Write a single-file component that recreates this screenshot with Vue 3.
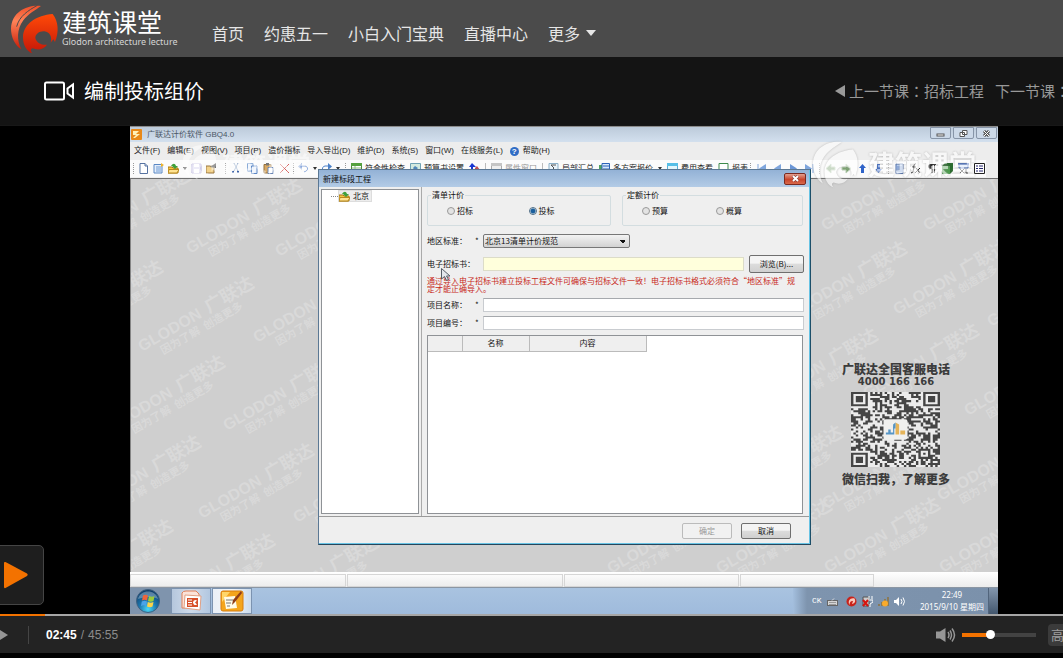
<script setup>
import { ref } from 'vue'

const navItems = ['首页', '约惠五一', '小白入门宝典', '直播中心']
const menus = ['文件(F)', '编辑(E)', '视图(V)', '项目(P)', '造价指标', '导入导出(D)', '维护(D)', '系统(S)', '窗口(W)', '在线服务(L)']

const flameLeft = 'M123 12C80 8 35 30 33 80C33 105 45 130 64 142C50 115 50 82 70 55C85 35 105 25 123 12Z'
const flameBody = 'M158 36C110 40 70 65 69 105C69 130 80 148 97 154C90 146 92 140 98 139C114 146 132 142 141 128C126 130 110 124 106 108C106 96 118 87 133 88C149 90 157 104 152 122L160 112L165 120C177 90 176 60 158 36Z'

// Each icon is a list of [path, fill, stroke] on an 11 x 11 grid
const icons = {
  doc: [['M2 .5H7L9.500 3V10.500H2Z', '#fff', '#5672a0'], ['M7 .5V3H9.500', '#c9d8ef', '#5672a0']],
  cal: [['M1 1.500H9V10H1Z', '#e4eefb', '#5b88c4'], ['M3 4H8M3 6H8M3 8H8', 'none', '#6e9bd4'], ['M8 0L11 2L8 4Z', '#f0b429', 'none']],
  folder: [['M0 4H4L5 5H10V10H0Z', '#f6c544', '#a87910'], ['M1 6.500H11L9 10H0Z', '#ffe391', '#b8891c'], ['M3 3C5 0 7 0 8 3H10L7 6L4 3H6Z', '#3fa03a', 'none']],
  save: [['M1 1H10V10H1Z', '#dcd9f2', '#b3add8'], ['M3 1H8V4H3ZM3 6H8V10H3Z', '#fff', 'none']],
  export: [['M0 3H8V10H0Z', '#f3d28a', '#997640'], ['M4 4L10 0V5Z', '#333', 'none']],
  cut: [['M3 0L7 8M7 0L3 8', 'none', '#8fa7c8'], ['M1 8H3V10H1ZM6 8H8V10H6Z', '#3c62a8', 'none']],
  copy: [['M.5 .5H6V8H.5Z', '#e7f0fb', '#7ea2d3'], ['M4.500 3H10V10.500H4.500Z', '#e7f0fb', '#5c86c4']],
  paste: [['M1 1.500H8V10H1Z', '#d9a964', '#94703a'], ['M3 0H6V2.500H3Z', '#777', 'none'], ['M5 4.500H10V10.500H5Z', '#fff', '#6b87b5']],
  del: [['M1 1L10 10M10 1L1 10', 'none', '#d6605c']],
  undo: [['M2 3H7C11 4 10 8 6 9', 'none', '#8aa8dc'], ['M0 3.500L4 0V7Z', '#8aa8dc', 'none']],
  redo: [['M9 3H4C0 4 1 8 5 9', 'none', '#4a80c8'], ['M11 3.500L7 0V7Z', '#4a80c8', 'none']],
  table: [['M.5 .5H10.500V10H.5Z', '#fff', '#4d8a3b'], ['M0 0H11V3H0Z', '#55a13e', 'none'], ['M1 5H10M4 3V10', 'none', '#8dbb7f']],
  gear: [['M.5 .5H10.500V10H.5Z', '#d4eadf', '#6fa2b5'], ['M3 5L5 3L8 5L5 8Z', '#4f86b9', 'none']],
  up2: [['M3 0L7 4H4V9H2V4H0Z', '#1836d0', 'none'], ['M6 5L8 3L11 7H8V10H6Z', '#c05050', 'none']],
  panel: [['M.5 .5H10.500V9H.5Z', '#eee', '#aaa'], ['M0 0H11V3H0Z', '#c5c5c5', 'none']],
  sum: [['M1 .5H10V10H1Z', '#eaf4fb', '#8bb0c9'], ['M3 2H8M3 2L6 5L3 8H8', 'none', '#555']],
  multi: [['M0 2H3V10H0Z', '#50a35e', 'none'], ['M3 .5H10.500V9H3Z', '#d6e7fb', '#2c62b8'], ['M4 3H10M4 6H10', 'none', '#2c62b8']],
  view: [['M.5 .5H10.500V10H.5Z', '#e3f6fc', '#56afd7'], ['M0 0H11V3H0Z', '#56bfe7', 'none']],
  sheet: [['M1 .5H10V10H1Z', '#fff', '#3e8b4c']],
  first: [['M2 1V10', 'none', '#7ea5dc'], ['M10 1V10L3 5.500Z', '#7ea5dc', 'none']],
  prev: [['M9 1V10L2 5.500Z', '#7ea5dc', 'none']],
  next: [['M2 1V10L9 5.500Z', '#6b96d6', 'none']],
  last: [['M9 1V10', 'none', '#7ea5dc'], ['M1 1V10L8 5.500Z', '#7ea5dc', 'none']],
  left: [['M1 5.500L6 1V4H10V7H6V10Z', '#7da373', '#b9cdb4']],
  right: [['M10 5.500L5 1V4H1V7H5V10Z', '#7da373', '#b9cdb4']],
  up: [['M5.500 1L9 5H7V10H4V5H2Z', '#2f63c8', 'none']],
  down: [['M5.500 10L9 6H7V1H4V6H2Z', '#2f63c8', 'none']],
  clip: [['M2 1H9V10.500H2Z', '#b9d0f2', '#4c6da8'], ['M3 4H8M3 6H8M3 8H8', 'none', '#6486c4']],
  fx: [['M6 1C4 0 4 3 3 9L1 10M2 4H6M6 5L10 10M10 5L5 10', 'none', '#222']],
  para: [['M5 1H10V2H9V10H8V2H6.500V10H5.500V6C1 6 1 1 5 1Z', '#222', 'none']],
  cube: [['M0 3L3 0H11V8L8 11H0Z', '#2b6b2f', 'none'], ['M0 3H8V11H0Z', '#4b9a4c', 'none']],
  link: [['M1 .5H10V5H1Z', '#cfe0fb', '#3e68bd'], ['M0 0H11V2H0Z', '#3e68bd', 'none'], ['M2 6L6 10M6 6L2 10M8 6V10H10', 'none', '#333']],
  list: [['M.5 .5H10.500V10.500H.5Z', '#fff', '#222'], ['M2 3H4M5 3H9M2 5.500H4M5 5.500H9M2 8H4M5 8H9', 'none', '#26266f']]
}

const groups = [
  { name: 'file', items: [{ i: 'doc' }, { i: 'cal' }, { i: 'folder' }, { caret: 1 }, { i: 'save' }, { i: 'export' }] },
  { name: 'edit', items: [{ i: 'cut' }, { i: 'copy' }, { i: 'paste' }, { i: 'del' }] },
  { name: 'history', items: [{ i: 'undo' }, { caret: 1 }, { i: 'redo' }, { caret: 1 }] },
  {
    name: 'project', items: [
      { i: 'table', t: '符合性检查' }, { i: 'gear', t: '预算书设置' }, { i: 'up2' }, { sep: 1 },
      { i: 'panel', t: '属性窗口', off: true }, { sep: 1 }, { i: 'sum', t: '局部汇总' },
      { i: 'multi', t: '多方案报价' }, { caret: 1 }, { i: 'view', t: '费用查看' }, { i: 'sheet', t: '报表' }]
  },
  { name: 'move', items: [{ i: 'first' }, { i: 'prev' }, { i: 'next' }, { i: 'last' }] },
  { name: 'arrows', items: [{ i: 'left' }, { i: 'right' }, { i: 'up' }, { i: 'down' }] },
  { name: 'extras', items: [{ i: 'clip' }, { i: 'fx' }, { i: 'para' }, { i: 'cube' }, { i: 'link' }, { i: 'list' }] }
]

// Anchor points of the repeated desktop watermark
const marks = [
  [78, 243], [189, 253], [278, 256], [50, 335], [141, 351], [256, 342], [112, 430], [226, 430],
  [88, 510], [201, 518], [296, 522], [60, 594], [162, 608], [266, 610],
  [610, 573], [719, 573], [827, 572], [942, 572], [825, 508], [940, 500], [730, 500],
  [765, 403], [866, 398], [967, 415], [794, 316], [896, 314], [990, 326], [824, 230], [926, 230]
]

// QR symbol: three finder squares and a deterministic module field
const N = 37
function finder(x, y) {
  for (const [fx, fy] of [[0, 0], [N - 7, 0], [0, N - 7]]) {
    const dx = x - fx, dy = y - fy
    if (dx >= -1 && dx <= 7 && dy >= -1 && dy <= 7) {
      const r = Math.max(Math.abs(dx - 3), Math.abs(dy - 3))
      return r === 3 || r <= 1 ? 1 : 0
    }
  }
  const a = Math.max(Math.abs(x - 30), Math.abs(y - 30))
  if (a <= 2) return a === 1 ? 0 : 1
  return -1
}
let seed = 4127
let qr = ''
for (let y = 0; y < N; y++) {
  for (let x = 0; x < N; x++) {
    seed = (seed * 1103515245 + 12345) % 2147483648
    const f = finder(x, y)
    if (f === 1 || (f === -1 && (seed >> 12) % 100 < 52)) qr += `M${x} ${y}h1v1h-1z`
  }
}

const kind = ref('投标')
const volume = ref(37)
const played = 4.2
</script>

<template>
  <div class="page">
    <header class="top">
      <a href="#" class="brand">
        <svg class="flame" viewBox="30 6 150 150" aria-hidden="true">
          <defs>
            <linearGradient id="fl" x1="0" y1="0" x2="0" y2="1">
              <stop offset="0" stop-color="#ff4a08" /><stop offset="1" stop-color="#c41708" />
            </linearGradient>
            <linearGradient id="fs" x1="0" y1="0" x2="0" y2="1">
              <stop offset="0" stop-color="#f0502a" /><stop offset=".35" stop-color="#ff8358" /><stop offset="1" stop-color="#c81c08" />
            </linearGradient>
          </defs>
          <path :d="flameLeft" fill="url(#fs)" />
          <path d="M112 10C84 26 58 42 50 74" fill="none" stroke="#4b4b4b" stroke-width="3" />
          <path :d="flameBody" fill="url(#fl)" />
        </svg>
        <span class="brand-text">
          <strong>建筑课堂</strong>
          <small>Glodon architecture lecture</small>
        </span>
      </a>
      <nav class="nav">
        <a v-for="n in navItems" :key="n" href="#">{{ n }}</a>
        <a href="#" class="more">更多<i class="tri-down"></i></a>
      </nav>
    </header>

    <div class="lesson">
      <svg class="cam" viewBox="0 0 30 20" fill="none" stroke="#fff" stroke-width="2" aria-hidden="true">
        <rect x="1" y="1.500" width="19" height="17" rx="1.500" /><path d="M29 3.500V16.500L23.500 12.500V7.500Z" />
      </svg>
      <h1>编制投标组价</h1>
      <div class="siblings">
        <a href="#" class="prev"><i class="tri-left"></i>上一节课：招标工程</a>
        <a href="#">下一节课：</a>
      </div>
    </div>

    <main class="stage">
      <section class="app">
        <div class="titlebar">
          <svg class="appicon" viewBox="0 0 11 11"><rect width="11" height="11" rx="1" fill="#e8891a" /><path d="M2 2H8L5 5H9L4 9H2L5 6H2Z" fill="#fff1b8" /></svg>
          <span>广联达计价软件 GBQ4.0</span>
          <div class="winbtns">
            <button aria-label="最小化"><svg viewBox="0 0 9 7"><rect x="1" y="4" width="7" height="2" fill="#fff" stroke="#555" /></svg></button>
            <button aria-label="还原"><svg viewBox="0 0 9 7"><path d="M3.500 .5H8V4.500H3.500ZM1 2.500H5.500V6.500H1Z" fill="#fff" stroke="#555" /></svg></button>
            <button aria-label="关闭"><svg viewBox="0 0 9 7"><path d="M2 1L7 6M7 1L2 6" stroke="#555" stroke-width="3" /><path d="M2 1L7 6M7 1L2 6" stroke="#fff" /></svg></button>
          </div>
        </div>
        <div class="menubar">
          <button v-for="m in menus" :key="m">{{ m }}</button>
          <button class="help"><i>?</i>帮助(H)</button>
        </div>
        <div class="toolbar">
          <div v-for="g in groups" :key="g.name" class="tools" :class="g.name">
            <i class="grip"></i>
            <template v-for="(it, k) in g.items" :key="k">
              <i v-if="it.caret" class="caret"></i>
              <i v-else-if="it.sep" class="sep"></i>
              <button v-else :disabled="it.off" :aria-label="it.t || it.i">
                <svg viewBox="0 0 11 11"><path v-for="(p, n) in icons[it.i]" :key="n" :d="p[0]" :fill="p[1]" :stroke="p[2]" /></svg>
                <span v-if="it.t">{{ it.t }}</span>
              </button>
            </template>
          </div>
        </div>

        <div class="desk">
          <svg class="marks" aria-hidden="true">
            <g transform="translate(-130 -178)">
              <g v-for="(m, k) in marks" :key="k" :transform="`translate(${m[0]} ${m[1]}) rotate(-30)`">
                <text class="m-name">GLODON</text><text class="m-cn" x="77">广联达</text>
                <text class="m-sub" x="17" y="13">因为了解</text><text class="m-sub" x="66" y="13">创造更多</text>
              </g>
            </g>
          </svg>
          <div class="contact">
            <b>广联达全国客服电话</b>
            <b class="tel">4000 166 166</b>
            <svg class="qr" viewBox="0 0 37 37" preserveAspectRatio="none" role="img" aria-label="二维码">
              <rect width="37" height="37" fill="#ececec" />
              <path :d="qr" fill="#454545" />
              <rect x="13.500" y="13.500" width="10" height="10" rx="1" fill="#f0f0ee" />
              <path d="M14.500 21V20H15.500V18.500H16.500V20H17.500V17H18V21Z" fill="#5795c5" />
              <path d="M18.500 21V15L20 16V21ZM20.500 21V19H22.500V21Z" fill="#e5b459" /><path d="M17.500 16L18.500 15V18H17.500Z" fill="#5795c5" />
            </svg>
            <b>微信扫我，了解更多</b>
          </div>
        </div>

        <div class="status"><i></i><i></i><i></i><i></i></div>

        <div class="taskbar">
          <button class="start" aria-label="开始">
            <svg viewBox="0 0 24 24">
              <defs><radialGradient id="orb" cx=".5" cy=".85" r=".85"><stop offset="0" stop-color="#4cd8f5" /><stop offset=".45" stop-color="#1b76ae" /><stop offset="1" stop-color="#0e3763" /></radialGradient></defs>
              <circle cx="12" cy="12" r="11.500" fill="url(#orb)" stroke="#40617f" />
              <path d="M2 10C4 0 20 0 22 10C16 7 8 8 2 10Z" fill="#fff" opacity=".3" />
              <path d="M7 6.500C9 5.500 10 5.500 12 6.500L11 11.500C9 10.500 8 10.500 6 11.500Z" fill="#f0643a" />
              <path d="M13 7C15 8 17 8 18.500 7L17.500 12C16 13 14 13 12 12Z" fill="#9ccb3b" />
              <path d="M5.800 12.500C8 11.500 9 11.500 11 12.500L10 17C8 16 7 16 5 17Z" fill="#4ba3e8" />
              <path d="M11.800 13C14 14 15 14 17.500 13L16.500 17.500C15 18.500 13 18.500 11 17.500Z" fill="#fbd349" />
            </svg>
          </button>
          <button class="task" aria-label="演示文稿">
            <svg viewBox="0 0 24 22">
              <path d="M3 3Q4 1 7 1H17L20 4V18H3Z" fill="#fbe3d9" stroke="#e0805a" /><path d="M6 5L22 6L21 20L5 18Z" fill="#fff" stroke="#e0a085" />
              <path d="M8 8H19V17H8Z" fill="#d7502a" /><path d="M9 10H13M9 12.500H13M9 15H13" stroke="#fff" /><path d="M18 10.500A2.500 2.500 0 1 0 18 14.500L16 12.500Z" fill="#fff" />
            </svg>
          </button>
          <button class="task on" aria-label="广联达计价软件">
            <svg viewBox="0 0 24 22">
              <rect x="1" y="1" width="22" height="20" rx="2" fill="#f4a51c" stroke="#d77c0d" /><path d="M2 2H10L2 12Z" fill="#ffd66a" />
              <path d="M4 7L15 6L17 18L6 19Z" fill="#fffbe9" /><path d="M6 10H13M6 13H11M7 16H10" stroke="#777" /><path d="M21 1L13 10L12 15L15 12L22 3Z" fill="#8f3d18" />
            </svg>
          </button>
          <div class="tray">
            <span class="lang">CK</span>
            <svg class="t1" viewBox="0 0 11 10"><rect x=".5" y="4" width="10" height="5" fill="#d5d5d5" stroke="#666" /><path d="M2 6H9M2 8H9" stroke="#999" /><path d="M5 4L7 2" stroke="#ddd" /></svg>
            <svg class="t2" viewBox="0 0 11 11"><circle cx="5.500" cy="5.500" r="5" fill="#c8231a" /><path d="M8.500 2.500C4 1.500 1.500 5 3.500 9C3.500 6 5 4.500 7 5L6 8C9 7.500 10 5 8.500 2.500Z" fill="#f9c6ba" /></svg>
            <svg class="t2" viewBox="0 0 11 11"><path d="M1 1H7V10H1Z" fill="#ccc" stroke="#555" /><path d="M7 0V3M10 0V3M6 4H11V6L8 8V11" stroke="#fff" fill="none" /><path d="M1 4L6 10M6 4L1 10" stroke="#d6150f" stroke-width="2" /></svg>
            <svg class="t2" viewBox="0 0 11 11"><path d="M0 8H2V10H0ZM3 6H5V10H3ZM6 3H8V10H6ZM9 1H11V10H9Z" fill="#897a59" /><circle cx="7" cy="7.500" r="3" fill="#f9ab2d" /></svg>
            <svg class="t2" viewBox="0 0 11 11"><path d="M0 4H2L5 1V10L2 7H0Z" fill="#fff" /><path d="M7 3Q9 5.500 7 8M9 1.500Q12 5.500 9 9.500" stroke="#fff" fill="none" /></svg>
            <div class="clock"><span>22:49</span><span>2015/9/10 星期四</span></div>
            <i class="show"></i>
          </div>
        </div>

        <form class="dialog" @submit.prevent>
          <div class="dlg-title"><span>新建标段工程</span><button type="button" aria-label="关闭"><svg viewBox="0 0 9 7"><path d="M2 1L7 6M7 1L2 6" stroke="#79302a" stroke-width="3" /><path d="M2 1L7 6M7 1L2 6" stroke="#fff" stroke-width="2" /></svg></button></div>
          <div class="dlg-body">
            <div class="tree">
              <i class="branch"></i>
              <span class="node"><svg viewBox="0 0 11 11"><path v-for="(p, n) in icons.folder" :key="n" :d="p[0]" :fill="p[1]" :stroke="p[2]" /></svg>北京</span>
            </div>
            <div class="fields">
              <div class="sets">
                <fieldset class="bill">
                  <legend>清单计价</legend>
                  <label><input v-model="kind" type="radio" name="kind" value="招标">招标</label>
                  <label><input v-model="kind" type="radio" name="kind" value="投标">投标</label>
                </fieldset>
                <fieldset class="quota">
                  <legend>定额计价</legend>
                  <label><input v-model="kind" type="radio" name="kind" value="预算">预算</label>
                  <label><input v-model="kind" type="radio" name="kind" value="概算">概算</label>
                </fieldset>
              </div>
              <div class="row r-area">
                <label for="area">地区标准：</label><em>*</em>
                <select id="area"><option>北京13清单计价规范</option></select>
              </div>
              <div class="row r-file">
                <label for="efile">电子招标书：</label><em></em>
                <input id="efile" class="yellow" type="text">
                <button type="button" class="btn browse">浏览(B)...</button>
              </div>
              <p class="warn">通过导入电子招标书建立投标工程文件可确保与招标文件一致！电子招标书格式必须符合“地区标准”规<br>定才能正确导入。</p>
              <div class="row"><label for="pname">项目名称：</label><em>*</em><input id="pname" type="text"></div>
              <div class="row"><label for="pno">项目编号：</label><em>*</em><input id="pno" type="text"></div>
              <div class="grid">
                <table>
                  <thead><tr><th class="c0"></th><th class="c1">名称</th><th class="c2">内容</th></tr></thead>
                </table>
              </div>
            </div>
          </div>
          <div class="dlg-foot">
            <button type="button" class="btn" disabled>确定</button>
            <button type="button" class="btn">取消</button>
          </div>
        </form>

        <svg class="cursor" viewBox="0 0 10 14"><path d="M.5 .5V11L3.500 8.500L5.500 12.500L7.500 11.500L5.500 8H9Z" fill="#e3e7ec" stroke="#555c66" /></svg>

        <div class="stamp ghost" aria-hidden="true"><svg viewBox="30 6 150 150"><path :d="flameLeft" /><path :d="flameBody" /></svg><span>建筑课堂</span></div>
        <div class="stamp" aria-hidden="true"><svg viewBox="30 6 150 150"><path :d="flameLeft" /><path :d="flameBody" /></svg><span>建筑课堂</span></div>
      </section>

      <button class="bigplay" aria-label="播放"><svg viewBox="0 0 26 28"><path d="M1 2Q1 .5 2.500 1L24 12.500Q25.500 13.800 24 15L2.500 27Q1 27.500 1 26Z" fill="#f37200" /></svg></button>
    </main>

    <div class="progress" role="progressbar" aria-label="进度" :aria-valuenow="played"><i :style="{ width: played + '%' }"></i></div>
    <footer class="controls">
      <button class="play" aria-label="播放"><i></i></button>
      <div class="time"><b>02:45</b><span>/</span><span>45:55</span></div>
      <svg class="speaker" viewBox="0 0 20 16"><path d="M0 4.500H4L9.500 1V15L4 11.500H0Z" fill="#969696" /><path d="M12 5Q14 8 12 11M14 3.500Q17 8 14 12.500M16 1.500Q21 8 16 14.500" fill="none" stroke="#969696" stroke-width="1.500" /></svg>
      <input v-model="volume" class="volume" type="range" min="0" max="100" aria-label="音量">
      <button class="quality">高清</button>
    </footer>
  </div>
</template>

<style>
body { background: #000; }
</style>

<style scoped>
* { box-sizing: border-box; }
button { font: inherit; color: inherit; background: none; border: 0; padding: 0; margin: 0; }
a { color: inherit; text-decoration: none; }
i, em { font-style: normal; }
svg { display: block; flex: none; }
.page {
  min-height: 100vh; display: flex; flex-direction: column; overflow: hidden; padding-bottom: 5px;
  background: #000; font-family: "Noto Sans CJK SC", "Liberation Sans", sans-serif;
}
.top { height: 57px; display: flex; align-items: center; background: #4b4b4b; }
.brand { display: flex; width: 212px; padding-left: 10px; color: #fff; flex: none; }
.flame { width: 50px; height: 50px; margin-right: 2px; }
.brand-text { display: flex; flex-direction: column; white-space: nowrap; padding-top: 2px; }
.brand-text strong { font-size: 25px; line-height: 30px; font-weight: 400; }
.brand-text small { font: 9px/12px "Noto Sans", sans-serif; color: #d5d5d5; }
.nav { display: flex; gap: 20px; font-size: 16px; line-height: 24px; color: #e6e6e6; white-space: nowrap; padding-top: 8px; }
.more { display: flex; align-items: center; gap: 6px; }
.tri-down { border: 5px solid transparent; border-top: 6px solid #e6e6e6; border-bottom: 0; }
.lesson { height: 69px; display: flex; align-items: center; background: #141414; padding-left: 44px; white-space: nowrap; border-bottom: 1px solid #181818; }
.cam { width: 30px; height: 20px; margin-right: 10px; }
h1 { margin: 0; font-size: 20px; line-height: 28px; font-weight: 400; color: #fff; }
.siblings { margin-left: auto; flex: 0 0 228px; display: flex; gap: 11px; color: #999; font-family: "Noto Sans CJK TC", sans-serif; font-size: 15px; line-height: 22px; overflow: hidden; }
.prev { display: flex; align-items: center; gap: 4px; flex: none; }
.tri-left { border: 6px solid transparent; border-right: 10px solid #999; border-left: 0; }

.stage { position: relative; flex: 1; display: flex; padding: 0 65px 0 130px; }
.app { position: relative; flex: 1; min-width: 0; display: flex; flex-direction: column; overflow: hidden; background: #ededed; font-family: "Liberation Sans", "Noto Sans CJK SC", sans-serif; font-size: 8px; line-height: 10px; color: #222; white-space: nowrap; }
.titlebar { height: 16px; display: flex; align-items: center; gap: 5px; border-top: 1px solid #8c8c8c; background: linear-gradient(#bccada, #d3e0ee); padding-left: 1px; color: #4a5666; }
.appicon { width: 11px; height: 11px; }
.winbtns { margin-left: auto; display: flex; gap: 2px; padding-right: 1px; align-self: flex-start; }
.winbtns button { width: 21px; height: 12px; border: 1px solid #8795a8; border-radius: 0 0 2px 2px; display: grid; place-items: center; background: #ccd9e8; }
.winbtns svg, .dlg-title svg { width: 9px; height: 7px; }
.menubar { height: 18px; display: flex; align-items: center; gap: 7px; padding-left: 4px; }
.help { display: flex; align-items: center; gap: 4px; }
.help i { width: 9px; height: 9px; border-radius: 50%; background: #2f6cc5; color: #fff; line-height: 9px; text-align: center; font-weight: 700; }
.toolbar { height: 18px; display: grid; grid-template-columns: 92px 68px 52px 405px 69px 69px auto; margin-right: 12px; padding-left: 3px; background: #fbfbfb; border-bottom: 1px solid #efefef; }
.tools { display: flex; align-items: center; gap: 5px; min-width: 0; }
.tools button { display: flex; align-items: center; gap: 3px; }
.tools button:disabled { color: #999; }
.tools svg { width: 11px; height: 11px; }
.tools.history { gap: 4px; }
.tools.file { gap: 4px; }
.grip { width: 1px; height: 11px; border-left: 1px dotted #999; flex: none; }
.sep { width: 1px; height: 12px; background: #bbb; }
.caret { border: 2px solid transparent; border-top: 3px solid #333; border-bottom: 0; }
.desk { flex: 1; position: relative; background: #cfcfcf; border-top: 1px solid #707070; border-left: 1px solid #858585; overflow: hidden; }
.marks { position: absolute; inset: 0; width: 100%; height: 100%; fill: #d9d9d9; }
.m-name { font: 700 16px "Liberation Sans", sans-serif; }
.m-cn { font: 700 18px "Noto Sans CJK SC", sans-serif; }
.m-sub { font: 700 11px "Noto Sans CJK SC", sans-serif; }
.contact { position: absolute; right: 48px; top: 183px; display: flex; flex-direction: column; align-items: center; font-family: "Noto Sans CJK SC", sans-serif; font-size: 12px; line-height: 13px; color: #3c3c3c; }
.contact b { font-weight: 900; }
.contact .tel { font: 700 10px/13px "DejaVu Sans", sans-serif; }
.qr { width: 89px; height: 75px; margin: 4px 0 5px; }
.status { height: 16px; display: grid; grid-template-columns: 216fr 217fr 175fr 135fr 123fr; gap: 1px; padding-top: 2px; background: linear-gradient(#fff, #ececec); border-bottom: 1px solid #8b96a3; }
.status i { border: 1px solid #d6d6d6; }
.taskbar { height: 26px; display: flex; background: linear-gradient(#a9c3e0, #9fbbdc); }
.start { width: 41px; background: #7f94ad; display: grid; place-items: center; padding-right: 5px; }
.start svg { width: 24px; height: 24px; }
.task { width: 40px; display: grid; place-items: center; background: linear-gradient(90deg, #b5c7dd, #cfdbea, #b2c7e0); border: 1px solid #7c93b0; margin-right: 1px; }
.task.on { background: linear-gradient(90deg, #e9eff6, #f3f6fa, #ccdcec); }
.task svg { width: 24px; height: 22px; }
.tray { margin-left: auto; width: 205px; display: flex; align-items: center; padding-left: 19px; background: linear-gradient(90deg, #a3bedd, #7e94ae 14px, #7b91ab); color: #fff; }
.tray svg { width: 11px; height: 11px; margin-right: 5px; }
.tray .t1 { margin: 0 8px 0 5px; }
.lang { font-family: "Liberation Mono", monospace; }
.clock { display: flex; flex-direction: column; align-items: center; margin-left: auto; font-family: "Noto Sans", "Noto Sans CJK SC", sans-serif; line-height: 12px; padding-right: 4px; }
.show { width: 10px; align-self: stretch; background: linear-gradient(#8396ad, #43576e); border-left: 1px solid #52657c; }

.dialog { position: absolute; left: 188px; top: 43px; width: 493px; height: 376px; display: flex; flex-direction: column; background: #efefef; border: 1px solid #5b7894; border-right-color: #1c4f69; border-bottom-color: #26465c; box-shadow: inset -1px -1px #68c3e4; font-family: "Noto Sans CJK SC", sans-serif; color: #111; }
.dlg-title { height: 17px; display: flex; align-items: center; justify-content: space-between; padding: 0 3px 0 4px; margin-right: 1px; background: linear-gradient(#93b2d6, #b3cbe6); }
.dlg-title button { width: 22px; height: 12px; display: grid; place-items: center; border: 1px solid #7b2a20; border-radius: 2px; background: linear-gradient(#e3a08f, #c9452c 55%, #d9694b); }
.dlg-body { flex: 1; display: flex; border-bottom: 1px solid #9a9a9a; min-height: 0; margin-right: 1px; }
.tree { width: 98px; margin: 2px; padding-left: 9px; background: #fff; border: 1px solid #8f9296; display: flex; align-items: flex-start; flex: none; }
.branch { width: 7px; border-top: 1px dotted #888; margin-top: 6px; }
.node { display: flex; gap: 3px; align-items: center; background: #ededed; border: 1px solid #ddd; padding-right: 2px; height: 12px; }
.node svg { width: 11px; height: 11px; }
.fields { flex: 1; min-width: 0; border-left: 1px solid #aaa; padding: 3px 5px 2px 5px; display: flex; flex-direction: column; }
.sets { display: grid; grid-template-columns: 184px 1fr; gap: 11px; padding-right: 1px; margin-bottom: 8px; }
fieldset { margin: 0; padding: 6px 0 0 19px; min-width: 0; height: 36px; border: 1px solid #d3dde0; border-radius: 2px; display: flex; align-items: flex-start; }
legend { margin-left: -16px; padding: 0 1px; line-height: 10px; }
fieldset label { display: flex; align-items: center; gap: 2px; width: 82px; }
.quota label { width: 74px; }
fieldset input { appearance: none; width: 8px; height: 8px; margin: 0; border: 1px solid #999; border-radius: 50%; background: #e3e3e3; }
fieldset input:checked { border-color: #4e6c85; background: radial-gradient(circle, #1b5f9d 0 2px, #e0edf5 3px); }
.row { display: flex; align-items: center; height: 14px; margin-bottom: 4px; }
.row label { width: 48px; flex: none; }
.row em { width: 8px; flex: none; }
.row input { flex: 1; min-width: 0; height: 14px; border: 1px solid #c9ccd0; border-top-color: #a6a9ad; background: #fff; padding: 0; margin: 0; font: inherit; }
.row .yellow { background: #ffffdc; border-color: #dcdcc8; margin-right: 5px; }
.r-area { margin-bottom: 7px; }
.r-file { height: 18px; margin-bottom: 4px; }
select { appearance: none; width: 147px; height: 14px; padding: 0 1px; font: inherit; color: inherit; border: 1px solid #777; border-radius: 2px; background: conic-gradient(from -45deg at 50% 100%, #111 90deg, transparent 0) right 3px center / 6px 3px no-repeat, linear-gradient(#f3f3f3, #d2d2d2); }
.btn { width: 50px; height: 16px; border: 1px solid #6f6f6f; border-radius: 2px; background: linear-gradient(#f4f4f4 45%, #dcdcdc 50%, #d0d0d0); }
.btn:disabled { color: #999; border-color: #bbb; background: #f1f1f1; }
.browse { width: 55px; height: 18px; flex: none; }
.warn { margin: 0 0 5px; color: #c8291a; line-height: 8px; }
.grid { flex: 1; margin: 1px 1px 0 0; background: #fff; border: 1px solid #8f9296; }
table { border-collapse: collapse; }
th { height: 15px; padding: 0; font-weight: 400; background: #efefef; border-right: 1px solid #bbb; border-bottom: 1px solid #bbb; }
.c0 { width: 34px; } .c1 { width: 67px; } .c2 { width: 117px; }
.dlg-foot { height: 27px; display: flex; align-items: center; justify-content: flex-end; gap: 9px; padding-right: 19px; }
.cursor { position: absolute; left: 311px; top: 142px; width: 10px; height: 14px; }
.stamp { position: absolute; right: 22px; top: 14px; display: flex; align-items: center; gap: 8px; color: #fff; opacity: .6; font: 700 27px/40px "Noto Sans CJK SC", sans-serif; pointer-events: none; filter: drop-shadow(0 0 1px #999); }
.stamp svg { width: 48px; height: 48px; fill: #fff; }
.stamp.ghost { left: 52px; right: auto; top: 18px; gap: 4px; opacity: .5; filter: none; font-size: 22px; line-height: 36px; }
.stamp.ghost svg { width: 36px; height: 36px; }
.bigplay { position: absolute; left: -1px; bottom: 9px; width: 45px; height: 60px; border: 1px solid #454545; border-radius: 0 5px 5px 0; background: #1e1e1e; padding-left: 3px; }
.bigplay svg { width: 26px; height: 28px; }

.progress { height: 2px; background: #a6a6a6; }
.progress i { display: block; height: 2px; background: #f37200; }
.controls { height: 37px; display: flex; align-items: center; background: #232323; overflow: hidden; font-family: "Liberation Sans", "Noto Sans CJK SC", sans-serif; }
.play { width: 29px; height: 18px; border-right: 1px solid #454545; margin-right: 17px; flex: none; display: flex; align-items: center; }
.play i { border: 5px solid transparent; border-left: 8px solid #969696; border-right: 0; }
.time { display: flex; gap: 4px; font-size: 12px; line-height: 16px; color: #8c8c8c; white-space: nowrap; }
.time b { color: #fff; }
.speaker { width: 20px; height: 16px; margin-left: auto; }
.volume { appearance: none; width: 74px; height: 10px; margin: 0 12px 0 6px; background: linear-gradient(90deg, #f37200 37%, #434343 37%) center / 100% 4px no-repeat; flex: none; }
.volume::-webkit-slider-thumb { appearance: none; width: 9px; height: 9px; border-radius: 50%; background: #fff; }
.quality { width: 38px; height: 22px; margin-right: -23px; padding-left: 3px; border-radius: 4px; background: #3b3b3b; color: #a0a0a0; font-size: 13px; text-align: left; flex: none; white-space: nowrap; }
</style>
